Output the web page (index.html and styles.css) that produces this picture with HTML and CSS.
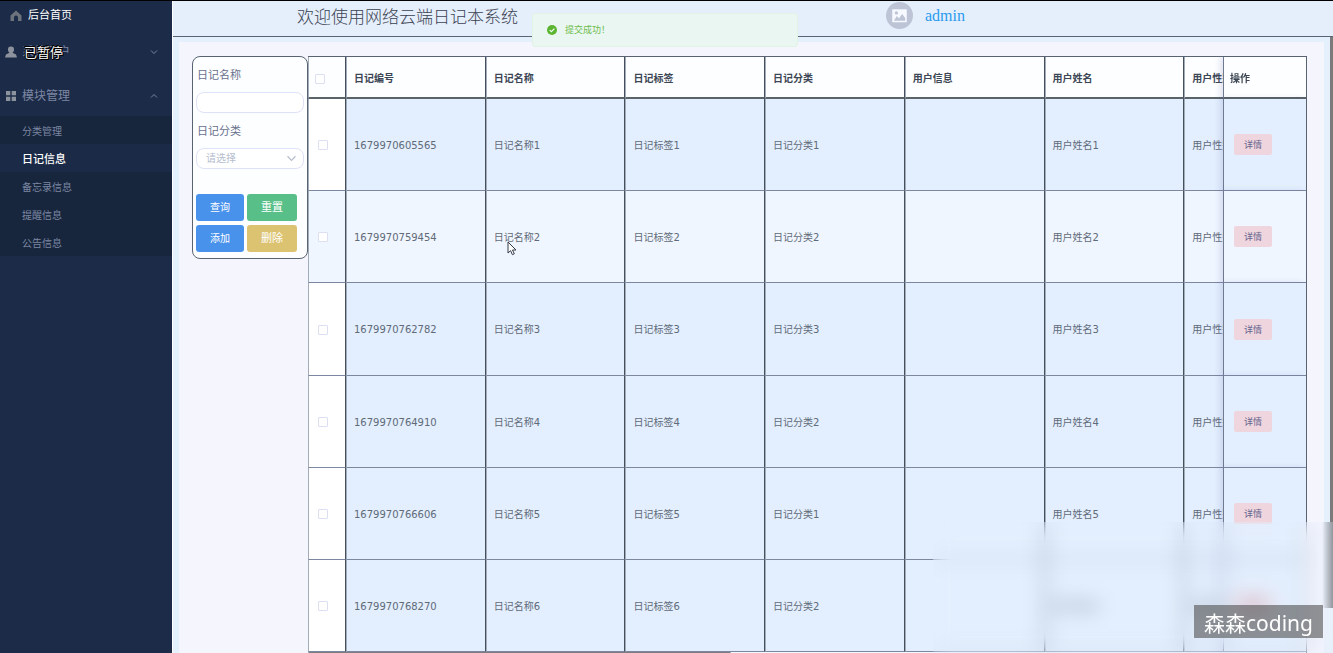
FILE: index.html
```html
<!DOCTYPE html>
<html lang="zh-CN">
<head>
<meta charset="utf-8">
<title>网络云端日记本系统</title>
<link rel="stylesheet" href="styles.css">
</head>
<body>
<div class="app">
  <nav class="sidebar">
    <a class="menu-item home" href="#"><svg class="icon" viewBox="0 0 12 12"><path d="M6 .5 11.5 5.5V11H8V7.5a2 2 0 0 0-4 0V11H.5V5.5z"/></svg>后台首页</a>
    <button class="menu-item user"><svg class="icon" viewBox="0 0 12 12"><path d="M6 .5a3 3 0 0 1 3 3.200C9 5 8.300 6.200 7.500 6.700L11 8.500 12 11.500H0L1 8.500 4.500 6.700C3.700 6.200 3 5 3 3.700A3 3 0 0 1 6 .5z"/></svg>系统用户<svg class="arrow" viewBox="0 0 8 8"><path d="M1 2.500 4 5.500 7 2.500"/></svg></button>
    <button class="menu-item module"><svg class="icon" viewBox="0 0 12 12"><path d="M1 1h4.300v4.300H1zM6.700 1H11v4.300H6.700zM1 6.700h4.300V11H1zM6.700 6.700H11V11H6.700z"/></svg>模块管理<svg class="arrow" viewBox="0 0 8 8"><path d="M1 5.500 4 2.500 7 5.500"/></svg></button>
    <div class="submenu">
      <a href="#">分类管理</a>
      <a class="active" href="#">日记信息</a>
      <a href="#">备忘录信息</a>
      <a href="#">提醒信息</a>
      <a href="#">公告信息</a>
    </div>
    <span class="paused">已暂停</span>
  </nav>
  <div class="page">
    <header class="topbar">
      <h1>欢迎使用网络云端日记本系统</h1>
      <div class="account">
        <svg class="avatar" viewBox="0 0 26 26"><circle cx="13" cy="13" r="13" fill="#bcc4d6"/><path d="M6 7h14v12.500H6z" fill="#f6f9ff"/><circle cx="10" cy="10.500" r="1.600" fill="#bcc4d6"/><path d="M7.500 18 10.500 13.500 12.500 16 15.500 11.500 18.500 15.500V18z" fill="#bcc4d6"/></svg>
        <a href="#">admin</a>
      </div>
    </header>
    <main class="content">
      <div class="workspace">
        <form class="filter">
          <label for="name">日记名称</label>
          <input id="name" type="text">
          <label for="type">日记分类</label>
          <div class="select-box">
            <select id="type"><option>请选择</option></select>
            <svg viewBox="0 0 8 8"><path d="M0.500 2 4 5.700 7.500 2"/></svg>
          </div>
          <div class="buttons">
            <button type="button">查询</button>
            <button type="button" class="reset">重置</button>
            <button type="button">添加</button>
            <button type="button" class="delete">删除</button>
          </div>
        </form>
        <div class="table-wrap">
          <table>
            <colgroup><col class="c-check"><col><col><col><col><col><col><col><col class="c-action"></colgroup>
            <thead>
              <tr><th class="check"><input type="checkbox" aria-label="全选"></th><th>日记编号</th><th>日记名称</th><th>日记标签</th><th>日记分类</th><th>用户信息</th><th>用户姓名</th><th>用户性别</th><th class="action">操作</th></tr>
            </thead>
            <tbody>
              <tr><td class="check"><input type="checkbox" aria-label="选择1"></td><td>1679970605565</td><td>日记名称1</td><td>日记标签1</td><td>日记分类1</td><td></td><td>用户姓名1</td><td>用户性别1</td><td class="action"><button>详情</button></td></tr>
              <tr class="hover"><td class="check"><input type="checkbox" aria-label="选择2"></td><td>1679970759454</td><td>日记名称2</td><td>日记标签2</td><td>日记分类2</td><td></td><td>用户姓名2</td><td>用户性别2</td><td class="action"><button>详情</button></td></tr>
              <tr><td class="check"><input type="checkbox" aria-label="选择3"></td><td>1679970762782</td><td>日记名称3</td><td>日记标签3</td><td>日记分类3</td><td></td><td>用户姓名3</td><td>用户性别3</td><td class="action"><button>详情</button></td></tr>
              <tr><td class="check"><input type="checkbox" aria-label="选择4"></td><td>1679970764910</td><td>日记名称4</td><td>日记标签4</td><td>日记分类2</td><td></td><td>用户姓名4</td><td>用户性别4</td><td class="action"><button>详情</button></td></tr>
              <tr><td class="check"><input type="checkbox" aria-label="选择5"></td><td>1679970766606</td><td>日记名称5</td><td>日记标签5</td><td>日记分类1</td><td></td><td>用户姓名5</td><td>用户性别5</td><td class="action"><button>详情</button></td></tr>
              <tr><td class="check"><input type="checkbox" aria-label="选择6"></td><td>1679970768270</td><td>日记名称6</td><td>日记标签6</td><td>日记分类2</td><td></td><td>用户姓名6</td><td>用户性别6</td><td class="action"><button>详情</button></td></tr>
            </tbody>
          </table>
          <div class="h-track"><div class="h-thumb"></div></div>
        </div>
      </div>
    </main>
  </div>
</div>
<div class="v-thumb"></div>
<div class="toast" role="status"><svg viewBox="0 0 10 10"><circle cx="5" cy="5" r="5" fill="#5cb531"/><path d="M2.700 5.100 4.400 6.700 7.400 3.600" fill="none" stroke="#effaf0" stroke-width="1.200"/></svg>提交成功！</div>
<svg class="cursor" viewBox="0 0 10 15"><path d="M1 1v11l2.600-2.300 1.800 4 1.900-.9-1.800-3.800H9z" fill="#fff" stroke="#333a48" stroke-width="1"/></svg>
<div class="frost"></div>
<div class="watermark">森森coding</div>
</body>
</html>
```
FILE: styles.css
```css
* { box-sizing: border-box; }

body {
  margin: 0;
  height: 100vh;
  overflow: hidden;
  position: relative;
  font: 10px/16px "DejaVu Sans", "Noto Sans CJK SC", sans-serif;
  color: #606a78;
}

button, input, select { font: inherit; }
a { text-decoration: none; color: inherit; }

.app {
  display: flex;
  height: 100%;
  border-top: 1px solid #000;
}

/* Sidebar */
.sidebar {
  position: relative;
  flex: 0 0 172px;
  background: #1c2b48;
  color: #7c87a3;
}

.menu-item {
  display: flex;
  align-items: center;
  width: 100%;
  height: 44px;
  padding: 2px 14px 0 5px;
  gap: 5px;
  border: 0;
  background: none;
  color: inherit;
  font-size: 12px;
  text-align: left;
}

.menu-item.home {
  height: 28px;
  padding-left: 10px;
  gap: 6px;
  color: #fff;
  font-size: 11px;
}

.icon { width: 12px; height: 12px; fill: #8d939d; }
.home .icon { fill: #6d737d; }

.arrow {
  width: 8px;
  height: 8px;
  margin-left: auto;
  fill: none;
  stroke: #7c87a3;
}

.submenu { margin-top: -1px; background: #17263c; }

.submenu a {
  display: block;
  height: 28px;
  padding: 2px 0 0 22px;
  line-height: 28px;
}

.submenu .active {
  background: #1b2b47;
  color: #fff;
  font-size: 11px;
  font-weight: 500;
}

.paused {
  position: absolute;
  top: 42px;
  left: 24px;
  color: #fff;
  font-size: 13px;
  line-height: 20px;
  text-shadow: 1px 0 #000, -1px 0 #000, 0 1px #000, 0 -1px #000, 1px 1px #000, -1px -1px #000;
}

/* Page */
.page {
  flex: 1;
  min-width: 0;
  display: flex;
  flex-direction: column;
  border-left: 1px solid #fff;
}

.topbar {
  display: flex;
  align-items: center;
  justify-content: space-between;
  flex: 0 0 36px;
  padding: 0 368px 6px 124px;
  border-bottom: 1px solid #5a6475;
  background: #e5effc;
}

.topbar h1 {
  margin: 0;
  color: #3b4252;
  font: 300 17px/24px "Noto Sans CJK SC", serif;
}

.account {
  display: flex;
  align-items: center;
  gap: 12px;
  color: #2a9aee;
  font: 16px/20px "Liberation Serif", serif;
}

.avatar { width: 27px; height: 27px; }

.content {
  flex: 1;
  min-height: 0;
  padding: 5px 9px 0 6px;
  background: #e4f0fc;
}

.workspace {
  display: flex;
  align-items: flex-start;
  height: 100%;
  padding: 14px 17px 0 13px;
  background: #f5f5fe;
}

/* Filter panel */
.filter {
  flex: 0 0 116px;
  padding: 8px 3px 6px;
  border: 1px solid #596372;
  border-radius: 8px;
  background: #fdfeff;
}

.filter label {
  display: block;
  padding-left: 1px;
  color: #68708c;
  font-size: 11px;
  line-height: 22px;
}

.filter > input, .select-box select {
  display: block;
  width: 100%;
  height: 21px;
  border: 1px solid #dfe2f7;
  border-radius: 8px;
  background: #fff;
}

.filter > input { margin: 5px 0 8px; }

.select-box { position: relative; margin-top: 5px; }

.select-box select {
  appearance: none;
  padding: 0 9px;
  color: #b4bccd;
}

.select-box svg {
  position: absolute;
  top: 6px;
  right: 8px;
  width: 9px;
  height: 9px;
  fill: none;
  stroke: #b4bccd;
}

.buttons {
  display: grid;
  grid-template-columns: 48px 50px;
  gap: 4px 3px;
  margin-top: 25px;
}

.buttons button {
  height: 27px;
  padding: 0;
  border: 0;
  border-radius: 3px;
  background: #4992ec;
  color: #fff;
}

.buttons .reset { background: #57bf87; font-size: 11px; }
.buttons .delete { background: #dcc372; font-size: 11px; }

/* Data table */
.table-wrap {
  flex: 1;
  min-width: 0;
  overflow: hidden;
  border-top: 1px solid #596372;
  border-right: 1px solid #596372;
}

table {
  width: 1099px;
  table-layout: fixed;
  border-collapse: separate;
  border-spacing: 0;
}

.c-check { width: 38px; }
.c-action { width: 83px; }

th, td {
  padding: 2px 0 0 7px;
  border-right: 1px solid #45505c;
  border-left: 1px solid #a3adba;
  text-align: left;
  white-space: nowrap;
}

th {
  height: 42px;
  padding-top: 4px;
  border-bottom: 2px solid #596368;
  background: #fdfeff;
  color: #3c4654;
  font-weight: 700;
}

td {
  height: 92px;
  border-bottom: 1px solid #7c87a0;
  background: #e3effe;
}

tbody tr:nth-child(3) td { height: 93px; }

td.check { background: #fff; }
.hover td, .hover td.check { background: #f0f6ff; }

.check input {
  appearance: none;
  display: block;
  width: 10px;
  height: 10px;
  margin: 0 0 0 2px;
  border: 1px solid #dcdff2;
  border-radius: 1px;
  background: #fff;
}

th.check input { margin-left: -1px; }
td.check { padding-top: 1px; }

.action {
  position: sticky;
  right: 0;
  padding-left: 6px;
  border-left-color: #6f7a90;
  border-right: 0;
  box-shadow: -3px 0 6px rgba(80, 90, 160, 0.16);
}

td.action { padding: 0 0 0 10px; }

.action button {
  display: block;
  width: 38px;
  height: 21px;
  padding: 1px 0 0;
  border: 0;
  border-radius: 2px;
  background: #efd6de;
  color: #65648e;
  font-size: 9px;
}

.h-track { background: #f4f8ff; }

.h-thumb {
  width: 42.4%;
  height: 3px;
  border-radius: 2px;
  background: #7c7c80;
}

/* Overlays */
.v-thumb {
  position: absolute;
  top: 37px;
  right: 0;
  width: 3px;
  height: 485px;
  background: #7b7b7b;
}

.toast {
  position: absolute;
  top: 13px;
  left: 532px;
  display: flex;
  align-items: center;
  gap: 8px;
  width: 266px;
  height: 34px;
  padding-left: 14px;
  border: 1px solid #e1f3e4;
  border-radius: 3px;
  background: #eaf6f1;
  color: #6cbd4b;
  font-size: 9px;
}

.toast svg { width: 10px; height: 10px; }

.cursor {
  position: absolute;
  top: 241px;
  left: 507px;
  width: 10px;
  height: 15px;
}

.frost {
  position: absolute;
  right: 0;
  bottom: 0;
  width: 400px;
  height: 131px;
  background: linear-gradient(to left, rgba(110, 110, 116, 0.7), rgba(110, 110, 116, 0)) right top / 11px 86px no-repeat;
  backdrop-filter: blur(10px);
}

.watermark {
  position: absolute;
  right: 10px;
  bottom: 15px;
  padding: 4px 10px 0;
  background: rgba(80, 80, 80, 0.6);
  color: #fff;
  font: 21px/29px "Noto Sans", "Noto Sans CJK SC", sans-serif;
}
```
